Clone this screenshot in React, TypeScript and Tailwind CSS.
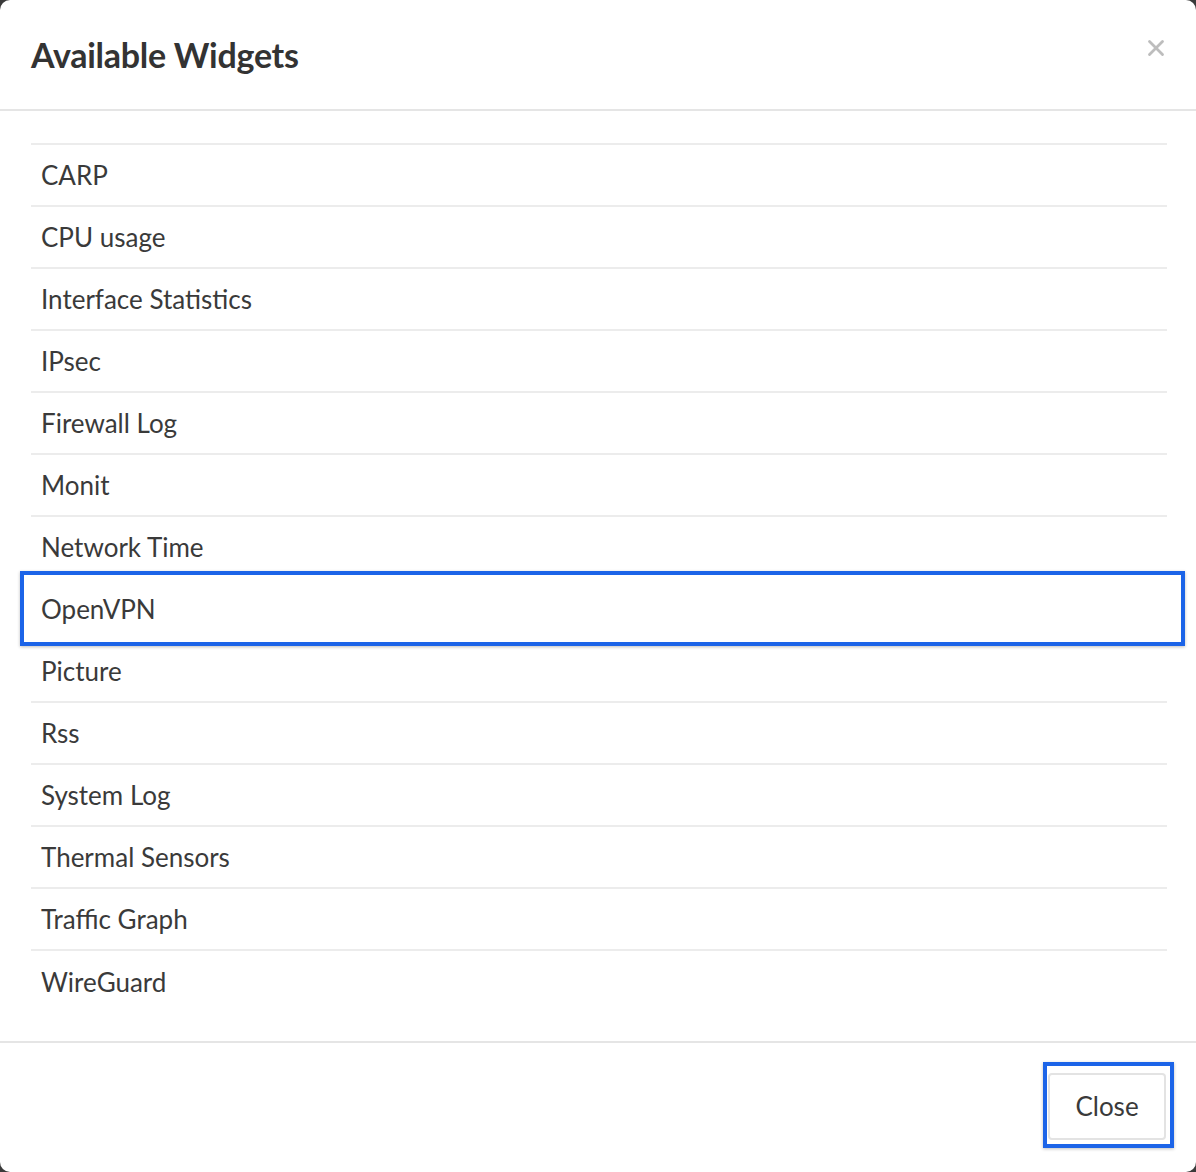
import { X } from 'lucide-react'

const WIDGETS = [
  'CARP',
  'CPU usage',
  'Interface Statistics',
  'IPsec',
  'Firewall Log',
  'Monit',
  'Network Time',
  'OpenVPN',
  'Picture',
  'Rss',
  'System Log',
  'Thermal Sensors',
  'Traffic Graph',
  'WireGuard',
]

export default function App() {
  return (
    <div className="w-[1196px] h-[1172px] bg-[#3a3a3a]" style={{ fontFamily: 'Lato, "Open Sans", sans-serif' }}>
      <div className="w-full h-full bg-white rounded-[10px] flex flex-col text-[#333]">
        {/* Header */}
        <div className="h-[111px] border-b-2 border-[#e5e5e5] flex items-start justify-between px-[31px] pt-[33px]">
          <h2 className="text-[34px] leading-[44px] font-bold text-[#333] tracking-[-0.25px]">Available Widgets</h2>
          <button className="mt-[2px] mr-[-4px] text-[#bdbdbd]">
            <X size={26} strokeWidth={2.6} />
          </button>
        </div>

        {/* Body */}
        <div className="flex-1 px-[31px] pt-[32px]">
          <ul className="border-t-2 border-[#ececec] w-[1136px]">
            {WIDGETS.map((name, i) => (
              <li
                key={name}
                className={`relative h-[62px] flex items-center pl-[10px] text-[26px] text-[#3a3a3a] ${
                  i < WIDGETS.length - 1 ? 'border-b-2 border-[#ececec]' : ''
                }`}
              >
                <span className="relative z-10">{name}</span>
                {name === 'OpenVPN' && (
                  <div className="absolute left-[-11px] right-[-18px] top-[-8px] bottom-[-7px] bg-white border-[4px] border-[#1c64e8] shadow-[0_1px_3px_rgba(0,0,0,0.25)] pointer-events-none" />
                )}
              </li>
            ))}
          </ul>
        </div>

        {/* Footer */}
        <div className="h-[131px] border-t-2 border-[#e5e5e5] flex items-start justify-end pr-[22px] pt-[19px]">
          <div className="border-[4px] border-[#1c64e8] pl-[1px] pr-[4px] pt-[7px] pb-[4px] shadow-[0_1px_3px_rgba(0,0,0,0.25)]">
            <button className="w-[118px] h-[67px] bg-white border-2 border-[#e3e3e3] rounded-[4px] text-[26px] text-[#3a3a3a]">
              Close
            </button>
          </div>
        </div>
      </div>
    </div>
  )
}
